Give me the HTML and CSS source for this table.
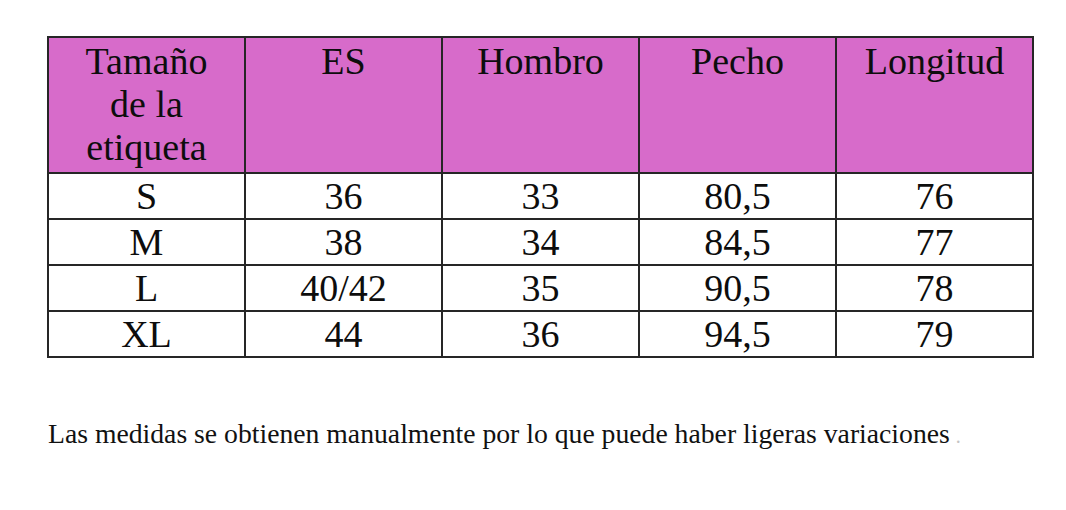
FILE: index.html
```html
<!DOCTYPE html>
<html>
<head>
<meta charset="utf-8">
<link rel="stylesheet" href="styles.css">
</head>
<body>
<div class="page">
  <table class="sizes">
    <thead>
      <tr>
        <th>Tamaño<br>de la<br>etiqueta</th>
        <th>ES</th>
        <th>Hombro</th>
        <th>Pecho</th>
        <th>Longitud</th>
      </tr>
    </thead>
    <tbody>
      <tr><td>S</td><td>36</td><td>33</td><td>80,5</td><td>76</td></tr>
      <tr><td>M</td><td>38</td><td>34</td><td>84,5</td><td>77</td></tr>
      <tr><td>L</td><td>40/42</td><td>35</td><td>90,5</td><td>78</td></tr>
      <tr><td>XL</td><td>44</td><td>36</td><td>94,5</td><td>79</td></tr>
    </tbody>
  </table>
  <p class="note">Las medidas se obtienen manualmente por lo que puede haber ligeras variaciones<span class="dot">.</span></p>
</div>
</body>
</html>
```
FILE: styles.css
```css
html, body {
  margin: 0;
  padding: 0;
  background: #ffffff;
}
.page, .sizes, .sizes th, .sizes td, .note {
  font-family: "Liberation Serif", "Times New Roman", Times, "DejaVu Serif", serif;
}
.page {
  padding: 36px 0 0 47px;
  color: #111;
}
.sizes {
  border-collapse: collapse;
  table-layout: fixed;
  width: 984px;
}
.sizes th, .sizes td {
  border: 2px solid #262626;
  width: 197px;
  text-align: center;
  font-size: 38px;
  font-weight: normal;
  padding: 0;
  color: #0d0d0d;
}
.sizes th {
  background: #d76bca;
  vertical-align: top;
  line-height: 43px;
  height: 136px;
  padding-top: 2px;
  box-sizing: border-box;
}
.sizes td {
  height: 46px;
  line-height: 44px;
  vertical-align: middle;
  box-sizing: border-box;
}
.note {
  margin: 60px 0 0 1px;
  font-size: 27.7px;
  color: #111;
}
.dot {
  color: #c4c4c4;
  margin-left: 6px;
  font-size: 20px;
}
```
